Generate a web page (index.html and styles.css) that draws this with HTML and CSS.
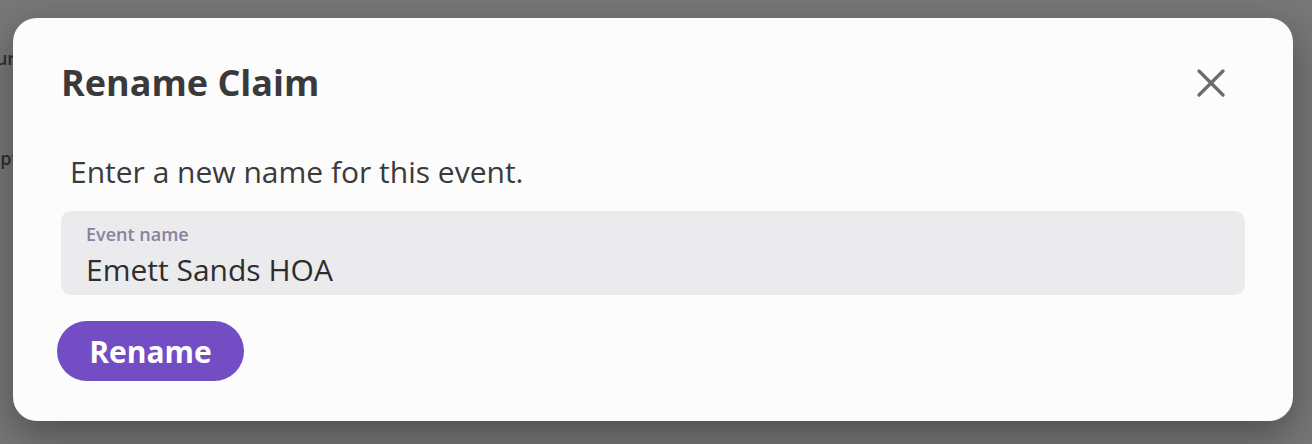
FILE: index.html
```html
<!DOCTYPE html>
<html lang="en">
<head>
<meta charset="utf-8">
<title>Rename Claim</title>
<link rel="stylesheet" href="styles.css">
</head>
<body>
<div class="page">
  <div class="bg-text">
    <span class="bg-line">Sur</span>
    <span class="bg-line">Opt</span>
  </div>
  <div class="backdrop">
    <div class="modal" role="dialog" aria-labelledby="dlg-title">
      <div class="modal-head">
        <h2 id="dlg-title" class="modal-title">Rename Claim</h2>
        <button class="close-btn" aria-label="Close">
          <svg width="28" height="28" viewBox="0 0 28 28" aria-hidden="true">
            <path d="M2 2 L26 26 M26 2 L2 26" stroke="#6b6b6b" stroke-width="3.2" stroke-linecap="round" fill="none"/>
          </svg>
        </button>
      </div>
      <p class="modal-desc">Enter a new name for this event.</p>
      <label class="field">
        <span class="field-label">Event name</span>
        <input class="field-input" type="text" value="Emett Sands HOA">
      </label>
      <div class="actions">
        <button class="primary-btn">Rename</button>
      </div>
    </div>
  </div>
</div>
</body>
</html>
```
FILE: styles.css
```css
* { box-sizing: border-box; }
html, body { margin: 0; padding: 0; }
body {
  width: 1312px;
  height: 444px;
  overflow: hidden;
  font-family: "Open Sans", "Noto Sans", sans-serif;
  background: #ffffff;
}
.page {
  position: relative;
  width: 1312px;
  height: 444px;
}
.bg-text {
  display: flex;
  flex-direction: column;
  padding: 46px 0 0 0;
  gap: 76px;
  font-size: 18px;
  font-weight: 600;
  color: #3a3a48;
}
.bg-line { display: block; margin-left: -14px; }
.backdrop {
  position: absolute;
  inset: 0;
  background: rgba(40, 40, 40, 0.63);
  display: flex;
  align-items: flex-start;
  padding: 18px 0 0 13px;
}
.modal {
  width: 1280px;
  background: #fcfcfc;
  border-radius: 24px;
  box-shadow: 0 14px 40px rgba(0, 0, 0, 0.35);
  padding: 41px 48px 40px;
  display: flex;
  flex-direction: column;
}
.modal-head {
  display: flex;
  justify-content: space-between;
  align-items: center;
  height: 48px;
}
.modal-title {
  margin: 0;
  font-size: 36px;
  line-height: 48px;
  font-weight: 700;
  color: #3a3a3c;
}
.close-btn {
  border: 0;
  background: none;
  padding: 0;
  width: 28px;
  height: 28px;
  margin-right: 20px;
  display: flex;
  cursor: pointer;
}
.modal-desc {
  margin: 45px 0 0 9px;
  font-size: 30px;
  line-height: 40px;
  color: #3a3a3a;
}
.field {
  display: flex;
  flex-direction: column;
  background: #ebebed;
  border-radius: 10px;
  height: 84px;
  padding: 11px 24px 0 25px;
  margin-top: 19px;
}
.field-label {
  font-size: 18px;
  line-height: 24px;
  font-weight: 600;
  color: #8a80a0;
}
.field-input {
  border: 0;
  background: transparent;
  padding: 0;
  margin: 6px 0 0 0;
  height: 36px;
  font-family: inherit;
  font-size: 30px;
  line-height: 36px;
  color: #2e2e2e;
  outline: none;
}
.actions {
  display: flex;
  margin-top: 26px;
  margin-left: -4px;
}
.primary-btn {
  border: 0;
  height: 60px;
  width: 187px;
  padding: 0;
  border-radius: 30px;
  background: #724dc4;
  color: #ffffff;
  font-family: inherit;
  font-size: 30px;
  font-weight: 700;
  cursor: pointer;
}
```
